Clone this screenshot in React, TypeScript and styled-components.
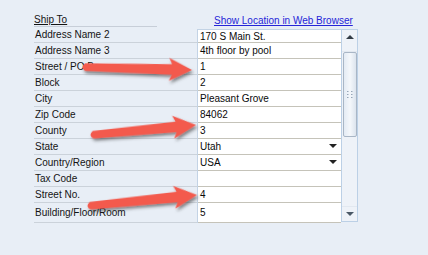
import React from "react";
import styled, { createGlobalStyle } from "styled-components";

const GlobalStyle = createGlobalStyle`
  html, body {
    margin: 0;
    padding: 0;
    background: #e8eef6;
  }
  body {
    font-family: "Liberation Sans", Arial, sans-serif;
    font-size: 10px;
    color: #141414;
  }
`;

const Page = styled.main`
  position: relative;
  width: 428px;
  height: 255px;
  box-sizing: border-box;
  padding: 13px 0 0 34px;
  overflow: hidden;
`;

const Header = styled.div`
  display: flex;
  align-items: flex-end;
  height: 14px;
`;

const HeaderTitle = styled.div`
  width: 123px;
  height: 12px;
  border-bottom: 1px solid #c7ced8;
  text-decoration: underline;
  line-height: 11px;
`;

const HeaderLink = styled.a`
  margin-left: 57px;
  color: #2525d8;
  text-decoration: underline;
  line-height: 11px;
  height: 12px;
`;

const Form = styled.div`
  display: flex;
`;

const LabelColumn = styled.div`
  width: 163px;
`;

const LabelRow = styled.div<{ $tall?: boolean }>`
  height: ${(p) => (p.$tall ? 19 : 15)}px;
  border-bottom: 1px solid #cbd2da;
  display: flex;
  align-items: center;
  padding-left: 1px;
  white-space: nowrap;
`;

const ValueColumn = styled.div`
  width: 143px;
  margin-top: 2px;
  background: #ffffff;
  border-top: 1px solid #c3d3e5;
  border-left: 1px solid #c3d3e5;
`;

const ValueRow = styled.div<{ $tall?: boolean; $first?: boolean }>`
  position: relative;
  height: ${(p) => (p.$first ? 12 : p.$tall ? 19 : 15)}px;
  border-bottom: 1px solid #c5c3b9;
  display: flex;
  align-items: center;
  padding-left: 2px;
  color: #0a0a0a;
  white-space: nowrap;
`;

const DropTriangle = styled.span`
  position: absolute;
  right: 4px;
  top: 5px;
  width: 0;
  height: 0;
  border-left: 4px solid transparent;
  border-right: 4px solid transparent;
  border-top: 4px solid #222;
`;

const Scrollbar = styled.div`
  width: 15px;
  margin-top: 2px;
  height: 191px;
  background: #eef2f8;
  border: 1px solid #bcd0e6;
  display: flex;
  flex-direction: column;
  align-items: center;
`;

const ScrollButton = styled.div<{ $down?: boolean }>`
  width: 15px;
  height: ${(p) => (p.$down ? 15 : 22)}px;
  display: flex;
  align-items: ${(p) => (p.$down ? "center" : "flex-start")};
  justify-content: center;
  padding-top: ${(p) => (p.$down ? 0 : 5)}px;
  box-sizing: border-box;
  border-${(p) => (p.$down ? "top" : "bottom")}: 1px solid #e2e8f0;
`;

const Arrowhead = styled.span<{ $down?: boolean }>`
  width: 0;
  height: 0;
  border-left: 4px solid transparent;
  border-right: 4px solid transparent;
  ${(p) =>
    p.$down
      ? "border-top: 4px solid #4a5866;"
      : "border-bottom: 4px solid #333c46;"}
`;

const Thumb = styled.div`
  width: 12px;
  height: 83px;
  margin-top: 0;
  border: 1px solid #a9b6c6;
  border-radius: 2px;
  background: linear-gradient(to right, #e4ebf4, #f4f7fb 50%, #dce4ee);
  display: flex;
  align-items: center;
  justify-content: center;
`;

const Track = styled.div`
  flex: 1;
`;

const Overlay = styled.svg`
  position: absolute;
  left: 0;
  top: 0;
  pointer-events: none;
`;

type Field = { label: string; value?: string; drop?: boolean };

const fields: Field[] = [
  { label: "Address Name 2", value: "170 S Main St." },
  { label: "Address Name 3", value: "4th floor by pool" },
  { label: "Street / PO Box", value: "1" },
  { label: "Block", value: "2" },
  { label: "City", value: "Pleasant Grove" },
  { label: "Zip Code", value: "84062" },
  { label: "County", value: "3" },
  { label: "State", value: "Utah", drop: true },
  { label: "Country/Region", value: "USA", drop: true },
  { label: "Tax Code" },
  { label: "Street No.", value: "4" },
  { label: "Building/Floor/Room", value: "5" },
];

// callout arrow drawn over the form, tail -> tip
function RedArrow({ x1, y1, x2, y2 }: { x1: number; y1: number; x2: number; y2: number }) {
  const len = Math.hypot(x2 - x1, y2 - y1);
  const angle = (Math.atan2(y2 - y1, x2 - x1) * 180) / Math.PI;
  const h = 20;
  const d = `M 3 -3.8 L ${len - h} -5.2 L ${len - h - 3} -11.5 L ${len} 0 L ${len - h - 3} 11.5 L ${len - h} 5.2 L 3 3.8 Q -2 0 3 -3.8 Z`;
  return (
    <g transform={`translate(${x1} ${y1}) rotate(${angle})`}>
      <path d={d} fill="#f35a4e" filter="url(#arrowShadow)" />
    </g>
  );
}

function App(): JSX.Element {
  const last = fields.length - 1;
  return (
    <>
      <GlobalStyle />
      <Page>
        <Header>
          <HeaderTitle>Ship To</HeaderTitle>
          <HeaderLink href="#">Show Location in Web Browser</HeaderLink>
        </Header>
        <Form>
          <LabelColumn>
            {fields.map((f, i) => (
              <LabelRow key={f.label} $tall={i === last}>
                {f.label}
              </LabelRow>
            ))}
          </LabelColumn>
          <ValueColumn>
            {fields.map((f, i) => (
              <ValueRow key={f.label} $first={i === 0} $tall={i === last}>
                {f.value}
                {f.drop && <DropTriangle />}
              </ValueRow>
            ))}
          </ValueColumn>
          <Scrollbar>
            <ScrollButton>
              <Arrowhead />
            </ScrollButton>
            <Thumb>
              <svg width="6" height="7" viewBox="0 0 6 7">
                {[0, 3, 6].map((y) =>
                  [0, 4].map((x) => (
                    <rect key={`${x}-${y}`} x={x} y={y} width="1.5" height="1" fill="#97a6b8" />
                  ))
                )}
              </svg>
            </Thumb>
            <Track />
            <ScrollButton $down>
              <Arrowhead $down />
            </ScrollButton>
          </Scrollbar>
        </Form>
        <Overlay width="428" height="255" viewBox="0 0 428 255">
          <defs>
            <filter id="arrowShadow" x="-10%" y="-60%" width="130%" height="240%">
              <feDropShadow dx="1.5" dy="2.5" stdDeviation="1.5" floodColor="#2a2a2a" floodOpacity="0.55" />
            </filter>
          </defs>
          <RedArrow x1={82} y1={67} x2={192} y2={70} />
          <RedArrow x1={90} y1={135} x2={196} y2={125} />
          <RedArrow x1={87} y1={206} x2={197} y2={195} />
        </Overlay>
      </Page>
    </>
  );
}

export default App;
